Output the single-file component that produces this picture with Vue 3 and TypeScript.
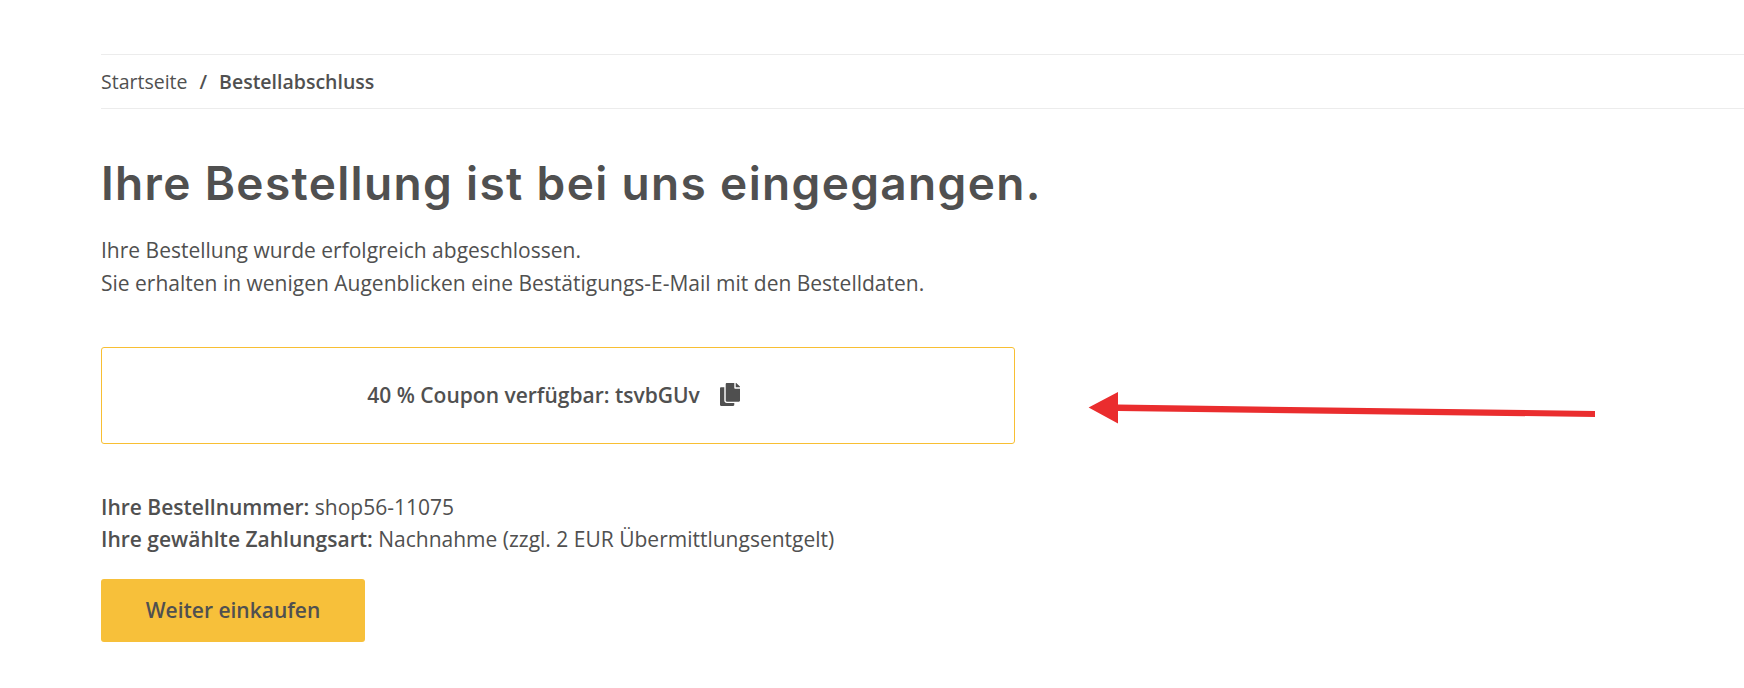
<script setup lang="ts">
const title: string = 'Ihre Bestellung ist bei uns eingegangen.'
</script>

<template>
  <div class="page">
    <nav class="crumbs">
      <span>Startseite</span>
      <span class="sep">/</span>
      <strong>Bestellabschluss</strong>
    </nav>
    <h1>{{ title }}</h1>
    <p class="intro">
      Ihre Bestellung wurde erfolgreich abgeschlossen.<br />
      Sie erhalten in wenigen Augenblicken eine Bestätigungs-E-Mail mit den Bestelldaten.
    </p>
    <div class="coupon">
      <span>40 % Coupon verfügbar: tsvbGUv</span>
      <svg class="copy" viewBox="0 0 448 512" width="20" height="23" fill="#4f4f4f">
        <path d="M320 448v40c0 13.3-10.7 24-24 24H24c-13.3 0-24-10.7-24-24V120c0-13.3 10.7-24 24-24h72v296c0 30.9 25.1 56 56 56h168zm0-344V0H152c-13.3 0-24 10.7-24 24v368c0 13.3 10.7 24 24 24h272c13.3 0 24-10.7 24-24V128H344c-13.2 0-24-10.8-24-24zm120.970-31.030L375.030 7.030c-4.500-4.500-10.600-7.030-16.970-7.030H352v96h96v-6.060c0-6.360-2.530-12.470-7.030-16.970z" />
      </svg>
    </div>
    <p class="details">
      <strong>Ihre Bestellnummer:</strong> shop56-11075<br />
      <strong>Ihre gewählte Zahlungsart:</strong> Nachnahme (zzgl. 2 EUR Übermittlungsentgelt)
    </p>
    <button class="cta" type="button">Weiter einkaufen</button>
    <svg class="arrow" width="540" height="40" viewBox="0 0 540 40">
      <path d="M26.600 20.500L56 5L56 17.600L533 24L533 30L56 24L56 36.600Z" fill="#ea2d2e" />
    </svg>
  </div>
</template>

<style>
html, body { margin: 0; background: #fff; }
</style>

<style scoped>
.page {
  position: relative;
  box-sizing: border-box;
  width: 1744px;
  height: 688px;
  padding: 54px 0 0 101px;
  overflow: hidden;
  color: #505050;
  font-family: "Open Sans", "Liberation Sans", sans-serif;
  font-size: 21px;
  line-height: 32px;
}
.crumbs {
  display: flex;
  align-items: center;
  gap: 12px;
  box-sizing: border-box;
  height: 55px;
  padding-top: 1px;
  border-top: 1px solid #ececec;
  border-bottom: 1px solid #ececec;
  font-size: 19.5px;
}
.crumbs strong, .details strong { font-weight: 600; }
.sep { font-weight: 600; }
h1 {
  margin: 42px 0 0;
  font-family: Inter, "Liberation Sans", sans-serif;
  font-size: 46px;
  letter-spacing: 1.35px;
  line-height: 64px;
  font-weight: 600;
  color: #505050;
}
.intro { margin: 19px 0 0; line-height: 33px; }
.coupon {
  box-sizing: border-box;
  display: flex;
  align-items: center;
  justify-content: center;
  gap: 20px;
  width: 914px;
  height: 97px;
  margin-top: 47px;
  padding: 0 9px 2px 0;
  border: 1px solid #f8bf33;
  border-radius: 3px;
  font-weight: 600;
}
.copy { flex: none; }
.details { margin: 47px 0 0; }
.cta {
  display: block;
  width: 264px;
  height: 63px;
  margin-top: 24px;
  padding: 0 0 2px;
  border: 0;
  border-radius: 3px;
  background: #f7c03a;
  color: #505050;
  font: 600 21px "Open Sans", "Liberation Sans", sans-serif;
}
.arrow {
  position: absolute;
  left: 1062px;
  top: 387px;
}
</style>
